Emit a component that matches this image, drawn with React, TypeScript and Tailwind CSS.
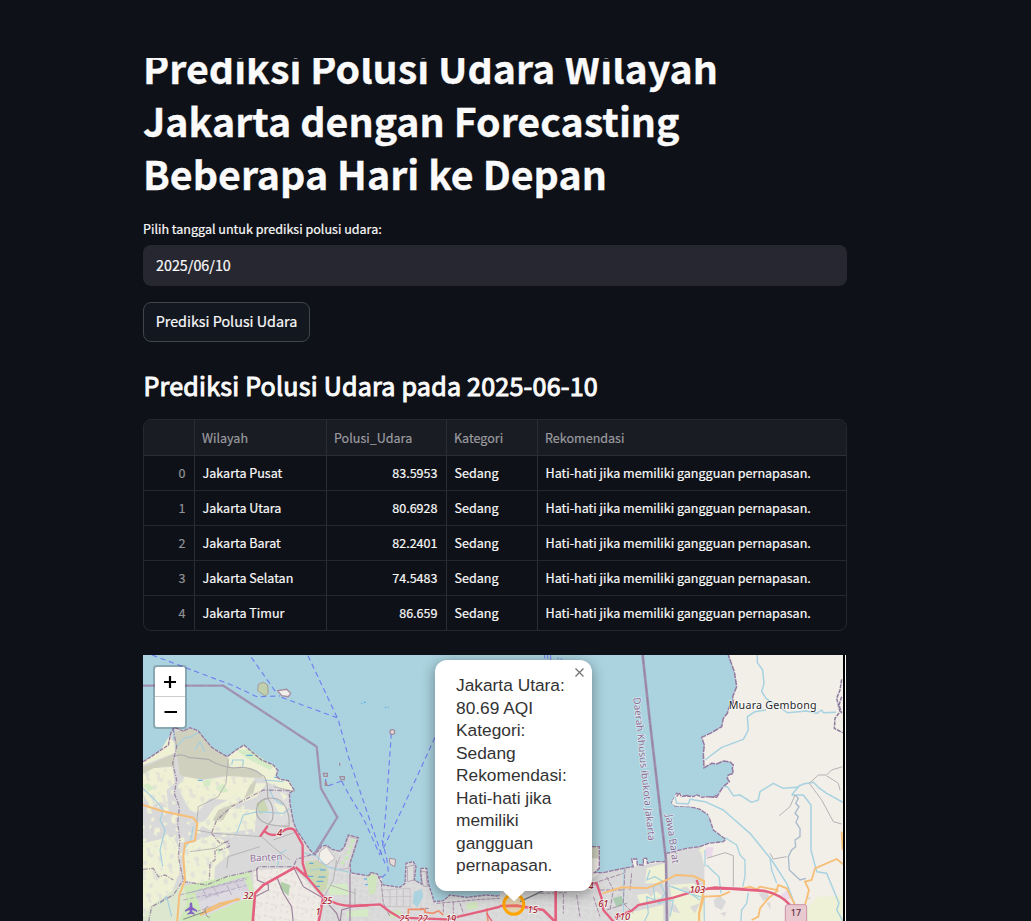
import React from 'react';

const rows = [
  ['0', 'Jakarta Pusat', '83.5953'],
  ['1', 'Jakarta Utara', '80.6928'],
  ['2', 'Jakarta Barat', '82.2401'],
  ['3', 'Jakarta Selatan', '74.5483'],
  ['4', 'Jakarta Timur', '86.659'],
];

const popupLines = ['Jakarta Utara:', '80.69 AQI', 'Kategori:', 'Sedang', 'Rekomendasi:', 'Hati-hati jika', 'memiliki', 'gangguan', 'pernapasan.'];

const COAST_W = 'M9 335L30 322 60 302 85 285 92 250 103 232 130 243 150 233 175 243 195 268 215 292 240 308 262 320 285 302 312 285 335 305 365 330 400 345 414 362 408 378 420 388 445 392 462 420 448 430 450 460 460 515 470 540 490 570 510 600 525 614 545 588 560 586 575 598 600 604 612 592 625 555 655 563 630 640 632 668 685 678 692 668 705 672 715 682 726 680';
const COAST_M = 'M205 678L215 668 232 672 240 690 250 705 300 712 315 700 318 640 340 635 348 650 343 690 365 702 362 655 380 655 385 700 395 730 402 755 430 752 450 735 500 742 560 735 590 738 700 720';
const COAST_E = 'M180 700L262 700 262 590 298 590 298 655 283 668 310 668 370 655 400 650 395 627 410 627 412 645 430 645 430 625 440 625 442 640 465 635 495 635 500 610 560 595 600 590 625 580 670 575 677 568 640 540 625 495 600 478 570 470 525 468 515 458 530 430 545 440 560 436 590 442 640 442 650 435';
const COAST_N = 'M205 440L230 442 240 425 250 410 268 395 262 385 265 375 280 370 277 355 280 345 270 336 250 333 230 342 215 340 192 353 190 310 193 285 185 262 215 248 245 230 250 205 262 190 268 170 280 160 278 140 290 110 283 65 265 15';

function Label({ x, y, children, size = 28 }: { x: number; y: number; children: string; size?: number }) {
  return (
    <text x={x} y={y} fontSize={size} fill="#a21f2d" stroke="#fff" strokeOpacity=".75" strokeWidth="5" paintOrder="stroke" textAnchor="middle" fontFamily="Noto Sans, sans-serif" fontStyle="italic" fontWeight="500">
      {children}
    </text>
  );
}

function MapDrawing() {
  return (
    <svg className="block h-[266px] w-[700px]" viewBox="143 655 700 266" fill="none">
      <defs>
        <pattern id="town" width="46" height="38" patternUnits="userSpaceOnUse" patternTransform="rotate(8)">
          <path d="M0 8H46M12 0V38M33 8V38M12 26H46M0 33H12" stroke="#f4f2f4" strokeWidth="2" />
          <path d="M20 12h7v5h-7zM3 22h5v6h-5zM37 30h6v4h-6z" fill="#c8cfc4" />
          <path d="M0 18H12M22 26V38M33 17H46" stroke="#b9b3bc" strokeWidth="1.2" />
        </pattern>
        <pattern id="hamlets" width="83" height="71" patternUnits="userSpaceOnUse" patternTransform="rotate(-14)">
          <path d="M4 6 16 2 22 12 15 22 19 34 8 30 10 18ZM38 10 52 16 48 30 60 38 50 46 38 36 42 24ZM66 48 78 44 80 58 70 66ZM22 50 34 48 30 62 18 60ZM64 8 74 12 70 22Z" fill="#d9d9d9" />
          <path d="M30 6 36 2 38 8ZM58 24 64 28 60 32ZM8 42 14 44 10 50Z" fill="#cde6bd" />
        </pattern>
        <pattern id="fields" width="79" height="67" patternUnits="userSpaceOnUse" patternTransform="rotate(22)">
          <path d="M5 8 18 3 24 16 14 20 20 30 8 28ZM44 12 56 18 50 28 60 40 46 44 38 30ZM22 48 36 50 28 60ZM66 4 74 10 68 20ZM66 48 74 52 70 62 62 58Z" fill="#eff0d6" />
        </pattern>
      </defs>
      <rect x="143" y="655" width="700" height="266" fill="#aad3df" />

      {/* western shore */}
      <g transform="translate(140 650) scale(.333333)">
        <path d={COAST_W + ' L726 820 9 820Z'} fill="#d9d9d9" />
        <path d="M9 440 100 420 130 520 200 500 300 455 345 500 345 560 220 560 130 600 100 700 9 760Z" fill="url(#fields)" />
        <path d="M105 245 150 235 175 245 215 292 250 315 320 350 380 385 345 382 250 378 175 390 120 375 108 300ZM25 345 100 312 105 350 60 350 9 390 9 350Z" fill="#d0d0bf" />
        <path d="M88 258 103 280 105 308 50 330 9 345 9 335 60 304ZM9 372 40 355 98 350 104 400 80 420 85 470 60 455 30 470 9 430ZM112 410 135 380 190 390 270 378 345 385 320 420 260 450 210 445 170 490 150 480 130 445Z" fill="#eff0d4" />
        <path d="M262 320 312 287 350 325 408 350 408 380 455 400 460 425 420 415 380 395 350 360 270 350ZM330 400 380 400 350 440 290 465 240 515 190 520 225 470 290 435ZM170 520 225 505 280 475 350 480 345 535 270 548 220 545ZM132 585 160 575 215 556 250 570 270 610 225 650 222 695 170 700 130 690ZM9 580 50 570 100 560 118 600 118 670 90 740 50 790 9 800Z" fill="#eff1d6" />
        <path d="M9 372 40 355 98 350 104 400 80 420 85 470 9 460ZM112 410 135 380 190 390 270 378 345 385 210 445 170 490 130 445ZM190 520 290 435 350 480 345 535 220 545ZM132 585 215 556 270 610 222 695 130 690ZM9 580 100 560 118 670 90 740 50 790 9 800Z" fill="url(#hamlets)" opacity=".6" />
        <path d="M290 300 330 298 400 350 390 360 320 325ZM230 410 250 402 265 425 240 428ZM190 392 214 388 210 408 190 410ZM9 405 25 400 42 415 25 425ZM230 590 245 600 235 617Z" fill="#d5ebc6" />
        <path d="M330 405 350 390 340 430 270 470 250 510 218 512 235 480 310 450Z" fill="#d0d0bf" />
        <path d="M400 400 440 430 450 500 430 530 390 520 380 460Z" fill="#dedede" />
        <path d="M400 460 440 470 425 500ZM420 425 445 440 430 450Z" fill="#eff1d6" />
        <path d="M348 460 372 450 385 480 360 495ZM495 635 545 630 568 665 560 715 540 735 500 680Z" fill="#cbd6b2" />
        <path d="M340 660 460 655 550 745 540 820 340 820Z" fill="#eee9e2" />
        <path d="M340 660 460 655 550 745 540 820 340 820Z" fill="url(#town)" opacity=".5" />
        <path d="M550 620 630 590 630 670 726 682 726 820 545 820 570 700Z" fill="url(#town)" opacity=".35" />
        <path d="M560 705 620 700 628 735 570 735ZM620 785 690 775 700 800 620 800Z" fill="#d5ebc6" />
        <path d="M120 710 330 665 345 740 335 820 112 820Z" fill="#cfe8b9" />
        <path d="M165 728 310 680 330 730 245 775 180 770Z" fill="#d6d2db" />
        <path d="M9 810 30 770 100 720 130 695 140 760 115 820Z" fill="#dde6cf" />
        <path d="M175 755 300 710 320 745 190 800Z" fill="#dedae2" />
        <path d="M423 695 450 705 445 738 420 715Z" fill="#b3cfaa" />
        <path d="M540 605 560 590 585 625 560 645 535 635Z" fill="#f2efe9" stroke="#c1bac0" strokeWidth="3" />
        <path d="M640 568 622 620 602 645" stroke="#c9e8b8" strokeWidth="9" strokeDasharray="12 6" />
        <path d="M598 602 615 590 625 560 652 566 625 655 585 660 600 620" stroke="#bfb5bf" strokeWidth="3" />
        <path d="M120 735 325 682M130 750 270 720M150 790 270 755M190 720 200 745M220 710 235 740M260 705 275 735M290 700 300 720M150 728 320 688M200 740 320 706" stroke="#b6adc4" strokeWidth="3" strokeDasharray="14 5" />
        <path d="M180 795 295 745M190 785 240 760 300 748" stroke="#f2bc72" strokeWidth="6" />
        <path d="M130 808 195 785" stroke="#777" strokeWidth="2.5" />
        <path d="M205 770 q-14 2 -8 16 q2 16 12 16" stroke="#999" strokeWidth="3" />
        <g stroke="#a4d0df" strokeWidth="3.5">
          <path d="M180 245 150 262 135 262 108 292M9 415 45 450 70 480 60 510 75 540 60 600 68 650M103 232 100 270M160 530 152 570 130 600M290 550 310 495 355 485 430 490 448 475M412 650 420 610 440 600M390 420 400 445 430 465M165 300 180 275 195 305M275 345 278 330 310 330 308 350M60 760 80 740 95 800M370 390 430 395M510 660 550 655M680 680 690 725 720 735M490 608 530 618 560 650 632 668" />
        </g>
        <path d="M174 391H188M319 316H338M403 382H414M508 640H520M540 660H558M504 679H520M535 681H557M530 694H550M520 709H540M672 687H698M675 704H692" stroke="#3598e8" strokeWidth="2.5" />
        <g stroke="#b0adaf" strokeWidth="3.5">
          <path d="M100 320 Q125 308 145 322 L205 328 Q240 350 280 354 Q330 345 365 375 Q385 380 383 445" />
          <path d="M383 445 C440 435 450 500 447 528 C400 530 350 520 349 485 Q350 450 383 445Q405 470 397 510L380 530" />
          <path d="M265 325 258 400 235 440 175 470 168 540 220 550 365 560 410 600 450 630M400 410 465 425M150 605 225 595 268 570M260 655 265 620 360 590M590 630 580 690 550 745M570 705 645 730M645 715V770M400 570 470 545" strokeWidth="2.5" />
        </g>
        <path d="M99 235 110 290 98 340 110 390 103 430 118 470 113 520 120 570 115 620 130 690 100 735 35 770 25 820M215 548 230 510 275 470 370 420 450 422M215 550 240 580 265 575 268 590 240 600 225 600 225 630 210 640 208 690M9 658 40 655 55 680 75 675 100 690M130 695 200 705 260 680 350 660 355 650 460 650 470 628 525 610" stroke="#81658f" strokeWidth="4" strokeDasharray="14 4 3 4" opacity=".65" />
        <path d="M350 655 352 690 385 705 385 720 345 740M460 650 490 710 550 745M550 745 590 790 600 820M410 680 430 730 455 770 460 820M630 670V820M645 768 605 780 600 820" stroke="#9c829e" strokeWidth="3.5" />
        <path d={COAST_W} stroke="#9679a0" strokeWidth="4" strokeDasharray="12 3" />
        <path d="M9 107H250L530 290 543 415 592 502 525 610" stroke="#a399b8" strokeWidth="7" />
        <path d="M9 107H250L530 290 543 415 592 502 525 610" stroke="#94799b" strokeWidth="1.8" strokeDasharray="25 5 4 5" opacity=".7" />
        <path d="M9 465 65 483 160 503 172 520 165 572 135 580 130 620 135 690 118 735 111 820" stroke="#f7be77" strokeWidth="6" />
        <g stroke="#e4607f" strokeWidth="9">
          <path d="M360 560 383 528M370 540Q390 562 415 552L438 538Q460 530 468 548L488 585V640L500 680 550 740 Q590 770 645 768L726 763" strokeWidth="7" />
          <path d="M465 652 370 705 345 730 338 820M467 652 500 680M550 740 535 820" strokeWidth="8" />
        </g>
        <g stroke="#7480ef" strokeWidth="3.5" strokeDasharray="16 11">
          <path d="M36 15 280 107 350 140 420 138M425 142 590 203M334 22 410 130M504 17 595 210 625 320 725 615M605 393 630 440 670 505 720 615M605 393 560 409 555 380" />
        </g>
        <path d="M355 103 370 97 383 105 385 130 375 138 353 122Z" fill="#c0d0ac" stroke="#a79c9b" strokeWidth="3" />
        <path d="M413 122 440 118 452 130 445 140 425 137Z" fill="#f2efe9" stroke="#a58ca2" strokeWidth="4" />
        <path d="M550 370h12v9h-10zM556 394l6 12h-6zM600 380h13v9h-10zM599 338v9" stroke="#a58c9c" strokeWidth="4" />
        <path d="M664 160h3m5-3h4" stroke="#3598e8" strokeWidth="2.5" />
        <path d="M153 757q4 0 4 8v6l14 10v4l-14-5v6l7 5v3l-11-3-11 3v-3l7-5v-6l-14 5v-4l14-10v-6q0-8 4-8Z" fill="#8461c4" />
        <Label x={419} y={557}>4</Label>
        <Label x={325} y={747}>32</Label>
        <Label x={562} y={762}>25</Label>
        <Label x={534} y={795}>1</Label>
        <text x="330" y="635" transform="rotate(-3 330 635)" fontSize="29" fill="#8c6d96" stroke="#fff" strokeOpacity=".6" strokeWidth="4" paintOrder="stroke" fontFamily="Noto Sans, sans-serif">Banten</text>
      </g>

      {/* harbour */}
      <g transform="translate(300 650) scale(.333333)">
        <path d={COAST_M + ' L700 820 205 820Z'} fill="#d9d9d9" />
        <path d={COAST_M + ' L700 820 205 820Z'} fill="url(#town)" opacity=".3" />
        <path d="M200 680 215 668 232 680 225 730 208 735ZM265 785 300 780 310 800 270 805ZM500 760 530 755 535 775 500 780Z" fill="#d0e4bd" />
        <path d="M342 725 365 718 370 740 352 772 338 760Z" fill="#aad3df" />
        <path d="M322 650 342 645 342 690 322 695ZM360 665 378 665 382 710 370 708Z" stroke="#b5a8b8" strokeWidth="3" fill="#dcdcdc" />
        <path d="M250 720 330 715V770H255M270 720V770M290 718V770M310 718V770M250 740H335" stroke="#c5bec6" strokeWidth="2.5" />
        <path d="M410 760 470 755 520 750 600 745M430 760V790M460 755V790M480 760 490 790M360 775 390 775M244 700 250 760 270 800" stroke="#a58ca6" strokeWidth="3" strokeDasharray="12 3" />
        <path d={COAST_M} stroke="#9679a0" strokeWidth="4" strokeDasharray="10 3" />
        <path d="M325 800V778H375V787L400 790 415 782 430 795M560 775 565 820" stroke="#ef8e6c" strokeWidth="5" />
        <path d="M640 765 700 730M645 775 710 740" stroke="#706878" strokeWidth="4" />
        <path d="M160 768 240 763 270 785 300 803 440 808 540 785 620 765 700 772" stroke="#e4607f" strokeWidth="7" />
        <path d="M560 790 580 820" stroke="#e4607f" strokeWidth="4" />
        <g stroke="#7480ef" strokeWidth="3.5" strokeDasharray="16 11">
          <path d="M274 250 258 480 247 600M405 262 360 360 310 470 245 605M246 570 260 625 265 665 243 685M240 600 255 640" />
        </g>
        <circle cx="277" cy="246" r="7" fill="#e5ddd9" stroke="#a58c9c" strokeWidth="4" />
        <path d="M268 625 287 628 284 650 270 642Z" fill="#e5ddd9" stroke="#a58c9c" strokeWidth="3" />
        <path d="M192 157h4M255 172h4m4 0h3" stroke="#3598e8" strokeWidth="2" />
        <Label x={313} y={816}>25</Label>
        <Label x={368} y={816}>22</Label>
        <Label x={453} y={816}>19</Label>
      </g>

      {/* eastern shore */}
      <g transform="translate(500 650) scale(.333333)">
        <path d={COAST_E + ' L1030 435 1030 820 0 820 0 735Z'} fill="#f2efe9" />
        <path d="M0 725 180 700 262 700 298 668 400 650 495 635 500 610 600 590 613 650 613 820 0 820Z" fill="#d9d9d9" />
        <path d="M30 735 170 710 320 690 400 720 400 820 30 820Z" fill="url(#town)" opacity=".3" />
        <path d="M440 655 495 640 497 700 435 700ZM510 705 580 700 612 720 612 820 505 820 515 760ZM410 735 470 725 490 740 420 760ZM380 790 490 765 490 820 375 820ZM595 600 615 590 610 615Z" fill="#eff1d6" />
        <path d="M262 590 298 590 298 625 262 625Z" fill="#d0d0bf" />
        <path d="M338 745 365 737 372 760 350 773Z" fill="#aacbaf" />
        <path d="M617 592 640 592 636 622 617 620Z" fill="#eadaea" />
        <path d="M510 770 525 762 540 790 520 785ZM435 725 465 720 455 740ZM540 715 560 710 580 730ZM570 770 600 760 585 790Z" fill="#d9d9d9" />
        <path d="M450 660 440 690 465 680 490 695 460 710 465 750 440 740 445 790 430 820M480 700 495 730 475 760 520 750 510 800M515 710 570 730 600 750M372 655 370 790" stroke="#a4d0df" strokeWidth="3.5" />
        <path d="M280 700 310 690 370 670M300 720 370 720M375 655 370 760 400 790M320 680 340 720 330 780M190 730V790M230 735 240 800M120 730 200 728M280 740 300 800M320 780 380 760M395 670 390 720" stroke="#a58ca6" strokeWidth="3" strokeDasharray="14 4" />
        <path d={COAST_E} stroke="#9679a0" strokeWidth="4" strokeDasharray="14 3" />
        <path d="M428 15 448 200 498 630 501 820" stroke="#a092b0" strokeWidth="8" />
        <path d="M428 15 448 200 498 630 501 820" stroke="#8c718f" strokeWidth="2" strokeDasharray="28 5 4 5" opacity=".8" />
        <path d="M308 730 365 712 440 715 500 690 527 675 580 678 612 693V720L597 790V820" stroke="#f7be77" strokeWidth="6" />
        <path d="M0 768 50 767 130 780 170 820M167 720V820" stroke="#e4607f" strokeWidth="8" />
        <path d="M60 755 130 722" stroke="#71777c" strokeWidth="4" />
        <path d="M275 700H290L305 745 310 780 345 820M345 803 395 782 415 765 520 743 590 722 630 715 735 717M590 690 595 705" stroke="#e4607f" strokeWidth="7" />
        <path d="M134 13V25M143 13V27M152 13V31M172 25h5m5 2h5" stroke="#7480ef" strokeWidth="3" />
        <Label x={98} y={790}>15</Label>
        <Label x={310} y={771}>61</Label>
        <Label x={367} y={811}>110</Label>
        <Label x={273} y={717}>4</Label>
        <text x="400" y="143" transform="rotate(84 400 143)" fontSize="30" textLength="432" lengthAdjust="spacingAndGlyphs" fill="#8c6d96" stroke="#fff" strokeOpacity=".6" strokeWidth="4" paintOrder="stroke" fontFamily="Noto Sans, sans-serif">Daerah Khusus ibukota Jakarta</text>
        <text x="497" y="495" transform="rotate(82 497 495)" fontSize="30" textLength="148" lengthAdjust="spacingAndGlyphs" fill="#8c6d96" stroke="#fff" strokeOpacity=".6" strokeWidth="4" paintOrder="stroke" fontFamily="Noto Sans, sans-serif">Jawa Barat</text>
      </g>

      {/* river delta */}
      <g transform="translate(640 650) scale(.333333)">
        <path d={COAST_N + ' L610 15 610 500 205 500Z'} fill="#f2efe9" />
        <path d="M95 462 105 435 122 428 130 440 165 438 205 440 205 475 165 470 110 468Z" fill="#f2efe9" />
        <path d="M530 740 610 738V820H495L500 780Z" fill="#eff1d6" />
        <path d="M220 750 240 738 258 755 245 780 225 770ZM355 730 380 725 390 745 370 752ZM240 790 258 785 255 800ZM380 760 390 755 392 780ZM500 745 510 740 512 750Z" fill="#d9d9d9" />
        <path d="M415 740 440 720 460 745 440 750Z" fill="#eadaea" />
        <path d="M110 440 118 428 124 440 135 438 160 440 170 434 185 442 205 440" stroke="#9679a0" strokeWidth="4" strokeDasharray="12 3" />
        <path d={COAST_N} stroke="#9679a0" strokeWidth="4.5" strokeDasharray="18 3" />
        <g stroke="#a7d2e0" strokeWidth="4.5" strokeLinejoin="round">
          <path d="M352 15V38L368 60 372 100 365 125 378 145 430 180 442 188 500 183 530 190 545 180 550 188 588 187M195 330 245 292 310 268 325 240 322 200 345 185 378 180M250 410H262L280 437 300 435 335 457 355 450 360 425 400 400 430 415 470 412 490 402 520 397 535 412 560 430 610 458M105 440 110 460 145 462 150 448 195 455 250 480 330 550 395 630 440 700 465 765M455 435 490 435 513 465V600L530 665 560 670 597 760 590 780 610 815M480 405 455 435" />
          <path d="M255 563 290 585 300 615 315 630V680L308 710M390 625 395 660 410 700M200 645 215 660 237 680 243 730M325 728 320 760 305 780 302 820" strokeWidth="4" />
          <path d="M80 705 150 730 185 742M195 650 195 600M192 740 193 820" strokeWidth="3.5" />
        </g>
        <path d="M465 435 475 445 467 460 477 470 465 490 475 500 468 517 480 535 480 560 465 570 467 590 455 600 445 620 448 660 480 690 498 685" stroke="#a9b9cb" strokeWidth="4" />
        <path d="M508 400 545 450 580 515 605 522M508 400 535 375 560 375 575 360 608 350M465 435 450 470 418 497M560 378 580 390 595 400 600 420M390 610 400 627 440 620M200 625 255 608 280 617V710" stroke="#b5b3b4" strokeWidth="3" />
        <path d="M605 88 600 120 590 145 600 185 585 205 583 235 608 248M605 140 597 165 605 190" stroke="#8b7b9c" strokeWidth="4.5" strokeDasharray="12 3" />
        <path d="M190 740 240 738 270 725M310 715 330 710 350 718 360 710 410 720 415 705 440 715 465 765M415 720 385 745 360 775 355 800 335 810M495 765 507 720 495 695 515 690 525 655 590 627 610 643M605 545 608 600M192 740 178 790V820" stroke="#f7be77" strokeWidth="5.5" />
        <path d="M200 717 225 713 375 723 Q425 735 450 765" stroke="#e4607f" strokeWidth="8" />
        <Label x={172} y={729}>103</Label>
        <rect x="436" y="764" width="64" height="62" rx="7" fill="#e8c9d0" stroke="#cc90a5" strokeWidth="3" />
        <text x="468" y="797" fontSize="27" textAnchor="middle" fill="#622f44" fontWeight="500" fontFamily="Noto Sans, sans-serif">17</text>
        <text x="266" y="176" fontSize="32" textLength="264" fill="#27272c" stroke="#fff" strokeOpacity=".7" strokeWidth="5" paintOrder="stroke" fontFamily="Noto Sans, sans-serif">Muara Gembong</text>
      </g>
      <circle cx="513.8" cy="904.3" r="10" stroke="#ffa500" strokeWidth="3" fill="#ffa500" fillOpacity=".2" />
    </svg>
  );
}

export default function App() {
  return (
    <div className="h-[921px] w-[1031px] overflow-hidden bg-[#0e1117] pt-[58px] font-['Noto_Sans_CJK_SC',sans-serif] text-[#fafafa]">
      <main className="ml-[143px] w-[704px]">
        <div className="h-[144px] overflow-hidden">
          <h1 className="-mt-[17px] text-[39.36px] leading-[52.8px] font-bold [-webkit-text-stroke:0.3px]">
            Prediksi Polusi Udara Wilayah
            <br />
            Jakarta dengan Forecasting
            <br />
            Beberapa Hari ke Depan
          </h1>
        </div>
        <label className="mt-[16px] block h-[22px] text-[12.55px] leading-[22px] [-webkit-text-stroke:0.2px]">Pilih tanggal untuk prediksi polusi udara:</label>
        <div className="mt-[5px] flex h-[41px] items-center rounded-lg bg-[#262730] px-[13px] pb-[2px] text-[14.32px] [-webkit-text-stroke:0.2px]">2025/06/10</div>
        <button className="mt-[16px] flex h-[40px] w-[167px] items-center justify-center rounded-lg border border-[#41444c] bg-[#131720] pb-[2px] text-[14.35px] [-webkit-text-stroke:0.2px]">Prediksi Polusi Udara</button>
        <h3 className="mt-[26px] h-[36px] pl-[0.5px] text-[25.07px] leading-[34px] font-normal tracking-[0.22px] whitespace-nowrap [-webkit-text-stroke:1px]">Prediksi Polusi Udara pada 2025-06-10</h3>
        <div className="mt-[15px] h-[212px] overflow-hidden rounded-lg border border-[#26282e] text-[12.55px] [-webkit-text-stroke:0.2px]">
          <div className="grid h-[36px] grid-cols-[51px_132px_120px_91px_1fr] border-b border-[#2b2d34] bg-[#1a1c24] leading-[36px] text-[#9a9b9f]">
            <span className="border-r border-[#2b2d34]" />
            <span className="border-r border-[#2b2d34] pl-[7px]">Wilayah</span>
            <span className="border-r border-[#2b2d34] pl-[7px]">Polusi_Udara</span>
            <span className="border-r border-[#2b2d34] pl-[7px]">Kategori</span>
            <span className="pl-[7px]">Rekomendasi</span>
          </div>
          {rows.map(([i, name, value]) => (
            <div key={i} className="grid h-[35px] grid-cols-[51px_132px_120px_91px_1fr] border-b border-[#26282e] leading-[34px]">
              <span className="border-r border-[#2b2d34] pr-[8.5px] text-right text-[#929397]">{i}</span>
              <span className="border-r border-[#2b2d34] pl-[7.5px]">{name}</span>
              <span className="border-r border-[#2b2d34] pr-[8.5px] text-right">{value}</span>
              <span className="border-r border-[#2b2d34] pl-[7.5px]">Sedang</span>
              <span className="pl-[7.5px]">Hati-hati jika memiliki gangguan pernapasan.</span>
            </div>
          ))}
        </div>
        <div className="relative mt-[24px] h-[266px] w-[703px] overflow-hidden border-r border-white bg-black">
          <MapDrawing />
          <div className="absolute top-[10px] left-[10px] w-[34px] rounded-[4px] border-2 border-black/20 bg-white bg-clip-padding">
            <button aria-label="Zoom in" className="flex h-[30px] w-[30px] items-center justify-center border-b border-[#ccc]">
              <svg className="size-[14px]" viewBox="0 0 14 14" stroke="#000" strokeWidth="2.2"><path d="M1 7H13M7 1V13" /></svg>
            </button>
            <button aria-label="Zoom out" className="flex h-[30px] w-[30px] items-center justify-center">
              <svg className="size-[14px]" viewBox="0 0 14 14" stroke="#000" strokeWidth="2"><path d="M1.5 7H14" /></svg>
            </button>
          </div>
          <div className="absolute top-[5px] left-[292px] h-[231px] w-[157px] rounded-[12px] bg-white pt-[14px] pl-[21px] font-['Liberation_Sans',sans-serif] text-[17.33px] leading-[22.53px] text-[#333] shadow-[0_3px_14px_rgba(0,0,0,0.4)]">
            {popupLines.map((line) => (
              <div key={line} className="whitespace-nowrap">{line}</div>
            ))}
            <svg className="absolute top-[8px] right-[8px] size-[9px]" viewBox="0 0 9 9" stroke="#757575" strokeWidth="1.3"><path d="M.5 .5 8.5 8.5M8.5 .5 .5 8.5" /></svg>
            <svg className="absolute top-[230px] left-[67px] h-[12px] w-[24px]" viewBox="0 0 24 12" fill="#fff"><path d="M0 0H24L13 10.5Q12 11.5 11 10.5Z" /></svg>
          </div>
        </div>
      </main>
    </div>
  );
}
